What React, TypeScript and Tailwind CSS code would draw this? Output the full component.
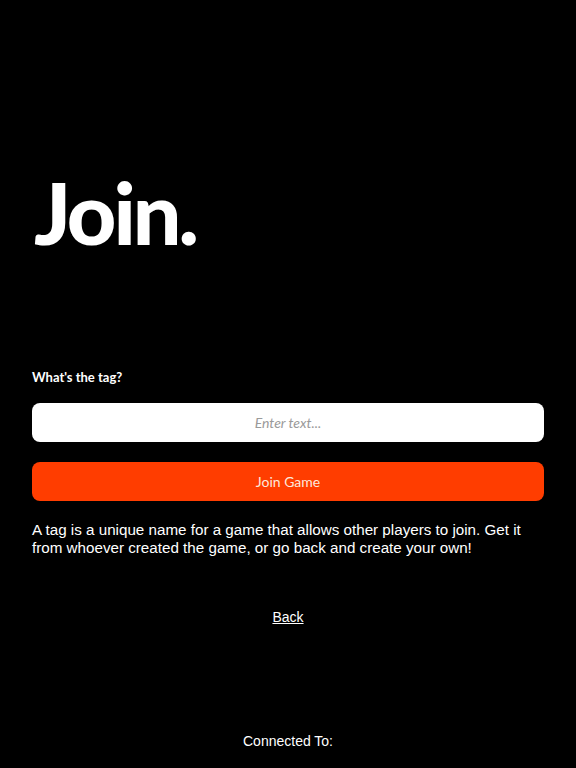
import React from "react";

export default function App() {
  return (
    <div className="w-[576px] h-[768px] bg-black text-white flex flex-col px-8 overflow-hidden font-['Liberation_Sans',Arial,sans-serif]">
      <h1 className="mt-[162px] pl-[2px] text-[86px] leading-[100px] font-black text-white tracking-[-3px] font-['Lato',sans-serif]">
        Join.
      </h1>
      <label className="mt-[107px] text-[13px] leading-[16px] font-bold font-['Lato',sans-serif]">
        What's the tag?
      </label>
      <input
        placeholder="Enter text..."
        className="mt-[18px] h-[39px] w-full rounded-lg bg-white text-center text-[14px] italic text-gray-700 placeholder:text-[#9a9a9a] outline-none font-['Lato',sans-serif]"
      />
      <button className="mt-[20px] h-[39px] w-full rounded-lg bg-[#ff3d00] text-[14px] text-[#fde8dc] font-['Lato',sans-serif]">
        Join Game
      </button>
      <p className="mt-[20px] text-[15.2px] leading-[18px] text-white">
        A tag is a unique name for a game that allows other players to join. Get it from whoever created the game, or go back and create your own!
      </p>
      <div className="mt-[52px] flex justify-center">
        <a href="#" className="text-[14px] leading-[17px] underline text-white">
          Back
        </a>
      </div>
      <div className="mt-[107px] text-center text-[14px] leading-[16px] text-white">
        Connected To:
      </div>
    </div>
  );
}
